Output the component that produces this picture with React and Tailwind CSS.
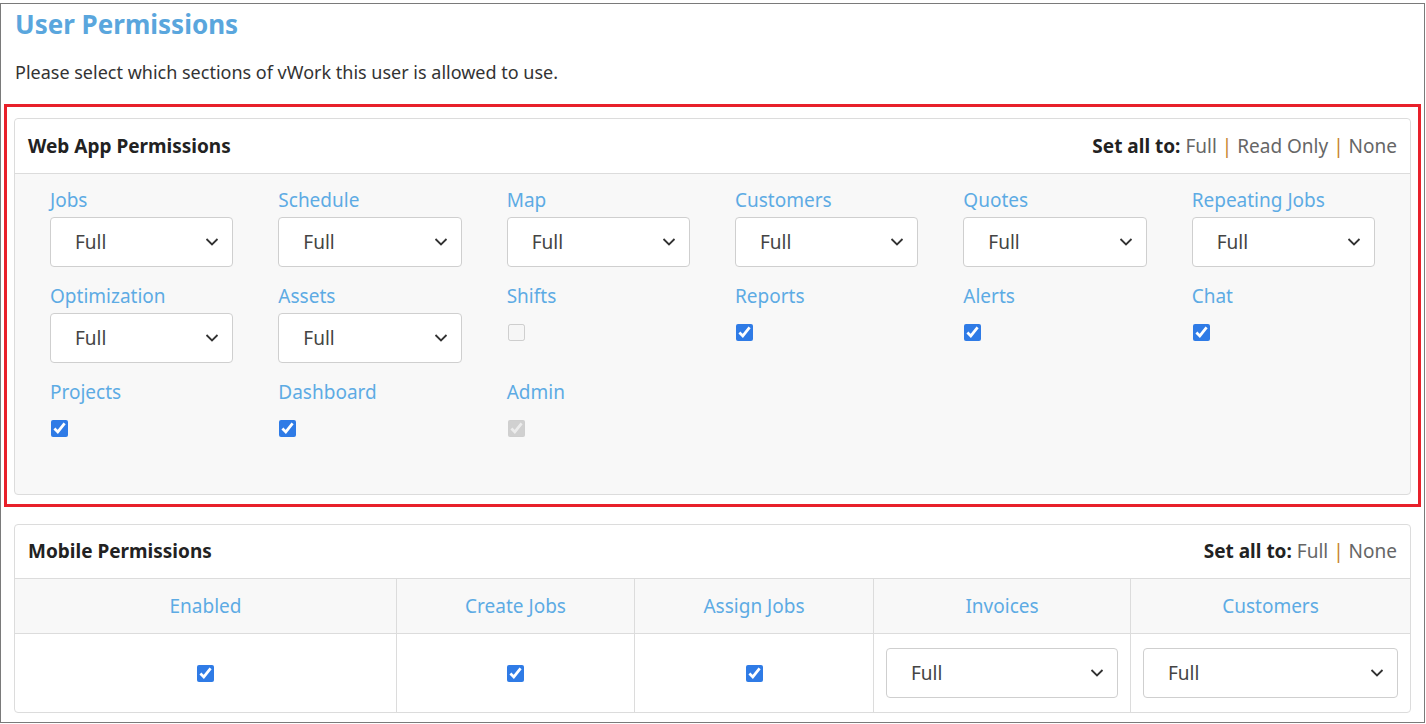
const Chevron = () => (
  <svg className="pointer-events-none absolute right-[14px] top-1/2 -translate-y-1/2" width="14" height="9" viewBox="0 0 14 9" fill="none">
    <path d="M1.5 1.5 7 7l5.5-5.5" stroke="#333" strokeWidth="1.8" />
  </svg>
);

function Select({ className = "" }) {
  return (
    <div className={"relative " + className}>
      <select className="h-[50px] w-full appearance-none rounded-[4px] border border-[#cfcfcf] bg-white pl-[24px] text-[19px] text-[#444] outline-none">
        <option>Full</option>
        <option>Read Only</option>
        <option>None</option>
      </select>
      <Chevron />
    </div>
  );
}

function Check({ checked = true, disabled = false }) {
  return (
    <input
      type="checkbox"
      defaultChecked={checked}
      disabled={disabled}
      className="h-[17px] w-[17px] accent-[#2f7be6]"
    />
  );
}

const webItems = [
  ["Jobs", "select"], ["Schedule", "select"], ["Map", "select"], ["Customers", "select"], ["Quotes", "select"], ["Repeating Jobs", "select"],
  ["Optimization", "select"], ["Assets", "select"], ["Shifts", "off"], ["Reports", "on"], ["Alerts", "on"], ["Chat", "on"],
  ["Projects", "on"], ["Dashboard", "on"], ["Admin", "disabledOn"],
];

export default function App() {
  return (
    <div className="h-[724px] w-[1426px] bg-white pt-[3px] font-['Liberation_Sans']">
      <div className="h-[720px] w-[1425px] border border-[#7a7a7a] px-[3px]">
        <h1 className="px-[11px] pt-[3px] text-[26px] font-bold leading-[34px] text-[#5aa6dd]">User Permissions</h1>
        <p className="mt-[21px] px-[11px] text-[18px] leading-[20px] text-[#333]">Please select which sections of vWork this user is allowed to use.</p>

        <div className="mt-[22px] border-[3px] border-[#e8202a] px-[7px] pb-[9px] pt-[11px]">
          <div className="rounded-[4px] border border-[#dcdcdc] bg-[#f8f8f8]">
            <div className="flex h-[55px] items-center justify-between rounded-t-[4px] border-b border-[#dcdcdc] bg-white px-[13px] text-[19px] text-[#222]">
              <span className="font-bold">Web App Permissions</span>
              <span>
                <span className="font-bold">Set all to: </span>
                <span className="text-[#666]">Full</span> <span className="text-[#c5822b]">|</span>{" "}
                <span className="text-[#666]">Read Only</span> <span className="text-[#c5822b]">|</span>{" "}
                <span className="text-[#666]">None</span>
              </span>
            </div>
            <div className="grid grid-cols-6 gap-x-[45px] px-[35px] pb-[18px] pt-[14px]">
              {webItems.map(([label, kind]) => (
                <div key={label} className="mb-[14px] h-[82px]">
                  <div className="text-[19px] leading-[24px] text-[#5dabe4]">{label}</div>
                  {kind === "select" ? (
                    <Select className="mt-[5px]" />
                  ) : (
                    <div className="mt-[14px] flex h-[20px] items-center pl-px">
                      <Check checked={kind !== "off"} disabled={kind === "off" || kind === "disabledOn"} />
                    </div>
                  )}
                </div>
              ))}
            </div>
          </div>
        </div>

        <div className="mx-[10px] mt-[17px] rounded-[4px] border border-[#dcdcdc]">
          <div className="flex h-[54px] items-center justify-between border-b border-[#dcdcdc] px-[13px] text-[19px] text-[#222]">
            <span className="font-bold">Mobile Permissions</span>
            <span>
              <span className="font-bold">Set all to: </span>
              <span className="text-[#666]">Full</span> <span className="text-[#c5822b]">|</span>{" "}
              <span className="text-[#666]">None</span>
            </span>
          </div>
          <div className="grid grid-cols-[382px_238px_239px_257px_1fr] text-[19px] text-[#5dabe4]">
            {["Enabled", "Create Jobs", "Assign Jobs", "Invoices", "Customers"].map((h, i) => (
              <div key={h} className={"flex h-[55px] items-center justify-center border-b border-[#dcdcdc] bg-[#f8f8f8] " + (i < 4 ? "border-r" : "")}>
                {h}
              </div>
            ))}
            {[0, 1, 2].map((i) => (
              <div key={i} className="flex h-[78px] items-center justify-center border-r border-[#dcdcdc]">
                <Check />
              </div>
            ))}
            <div className="flex h-[78px] items-center border-r border-[#dcdcdc] px-[12px]">
              <Select className="w-full" />
            </div>
            <div className="flex h-[78px] items-center px-[12px]">
              <Select className="w-full" />
            </div>
          </div>
        </div>
      </div>
    </div>
  );
}
